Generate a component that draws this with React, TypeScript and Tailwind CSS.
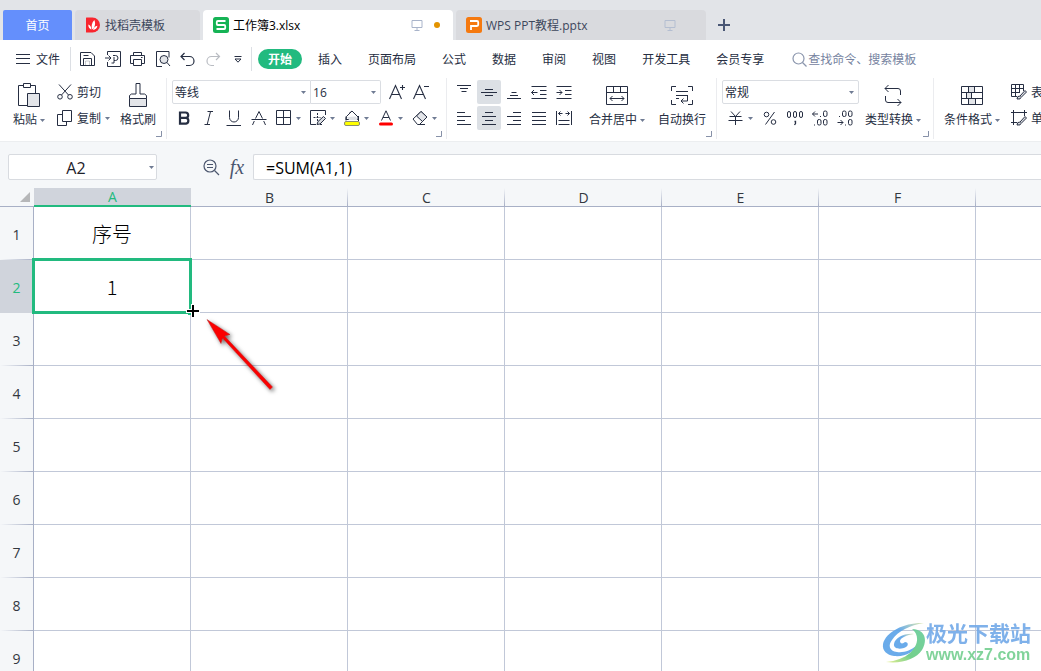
import React, { useState } from "react";
import type { ReactNode } from "react";

const MENUS = ["插入", "页面布局", "公式", "数据", "审阅", "视图", "开发工具", "会员专享"];
const COLUMNS = ["A", "B", "C", "D", "E", "F", "G"];
const ROWS = [1, 2, 3, 4, 5, 6, 7, 8, 9];

/* ---------- Shared pieces ---------- */

function Icon({ w = 16, h = 16, children }: { w?: number; h?: number; children: ReactNode }) {
  return (
    <svg width={w} height={h} viewBox={`0 0 ${w} ${h}`} fill="none" stroke="currentColor" className="shrink-0" aria-hidden="true">
      {children}
    </svg>
  );
}

function Caret() {
  return (
    <svg width="5" height="3" viewBox="0 0 5 3" className="shrink-0 text-[#6f7b93]" aria-hidden="true">
      <path d="M0 0h5L2.5 3z" fill="currentColor" />
    </svg>
  );
}

function ToolButton({ label, active, children }: { label: string; active?: boolean; children: ReactNode }) {
  return (
    <button
      aria-label={label}
      className={`flex h-6 w-6 items-center justify-center rounded-xs ${active ? "bg-[#dce0e5]" : "hover:bg-gray-100"}`}
    >
      {children}
    </button>
  );
}

function SplitButton({ label, children }: { label: string; children: ReactNode }) {
  return (
    <button aria-label={label} className="flex h-6 w-[33px] items-center gap-1 rounded-xs pl-1 hover:bg-gray-100">
      {children}
      <Caret />
    </button>
  );
}

function BigButton({ label, caret, children }: { label: string; caret?: boolean; children: ReactNode }) {
  return (
    <button className="flex shrink-0 flex-col items-center rounded-xs px-1 pt-px hover:bg-gray-100">
      <span className="flex h-7 items-center">{children}</span>
      <span className="flex items-center gap-[3px] leading-[22px] whitespace-nowrap">
        {label}
        {caret && <Caret />}
      </span>
    </button>
  );
}

function SmallButton({ label, caret, children }: { label: string; caret?: boolean; children: ReactNode }) {
  return (
    <button className="flex h-6 items-center gap-1 rounded-xs px-1 whitespace-nowrap hover:bg-gray-100">
      {children}
      <span className="pt-0.5">{label}</span>
      {caret && <Caret />}
    </button>
  );
}

function Group({ className, launcher = true, children }: { className: string; launcher?: boolean; children: ReactNode }) {
  return (
    <section className={`relative flex shrink-0 border-r border-[#ebecef] pt-0.5 ${className}`}>
      {children}
      {launcher && (
        <button aria-label="更多设置" className="absolute right-1 bottom-0.5 text-[#8791a8]">
          <Icon w={6} h={6}>
            <path d="M0 5.500h5.500V0" />
          </Icon>
        </button>
      )}
    </section>
  );
}

function SelectBox({ label, value, options, className }: { label: string; value: string; options: string[]; className: string }) {
  return (
    <label className={`relative flex h-6 items-center border border-[#dadde2] bg-white ${className}`}>
      <select aria-label={label} defaultValue={value} className="h-full w-full appearance-none bg-transparent pt-0.5 pl-0.5 outline-none">
        {options.map((o) => (
          <option key={o}>{o}</option>
        ))}
      </select>
      <span className="pointer-events-none absolute right-1">
        <Caret />
      </span>
    </label>
  );
}

function MonitorIcon() {
  return (
    <Icon w={12} h={12}>
      <path d="M1 1.500h10v7H1zM6 8.500v3M3.500 11.500h5" />
    </Icon>
  );
}

/* ---------- Document tabs ---------- */

function TabBar() {
  return (
    <nav className="flex h-10 items-end gap-[3px] bg-[#e2e4e8] pl-[3px] text-[#3d475c]">
      <button className="h-[30px] w-[69px] rounded-t-xs bg-[#648ffc] pt-0.5 text-white">首页</button>
      <button className="flex h-[30px] w-[125px] items-center gap-1 rounded-t-sm bg-[#d9dade] pl-[10px]">
        <svg width="16" height="16" viewBox="0 0 16 16" aria-hidden="true">
          <path d="M1 1Q1 .5 1.500 .5h6a7.500 7.500 0 0 1 0 15h-6Q1 15.500 1 15z" fill="#f8262f" />
          <path d="M7.300 12.500C6 9.500 6.600 6 9.300 3c1.500 3.200 1 7-2 9.500zM6.400 12.800C4.300 11.800 3.200 10 3.300 7.600c2 .9 3.300 2.800 3.100 5.200zM8 13c.5-2.200 2-3.800 4.400-4.200-.3 2.500-2 4.100-4.400 4.200z" fill="#fff" />
        </svg>
        <span className="pt-0.5">找稻壳模板</span>
      </button>
      <button className="flex h-[30px] w-[250px] items-center rounded-t-sm bg-white pr-[13px] pl-[10px] text-black">
        <svg width="16" height="16" viewBox="0 0 16 16" aria-hidden="true">
          <rect width="16" height="16" rx="2.500" fill="#16b355" />
          <path d="M12.500 4H4.800q-1 0-1 1v2q0 1 1 1h6.400q1 0 1 1v2q0 1-1 1H3.500" fill="none" stroke="#fff" strokeWidth="1.800" />
        </svg>
        <span className="ml-1 pt-0.5">工作簿3.xlsx</span>
        <span className="ml-auto text-[#a9b4ca]">
          <MonitorIcon />
        </span>
        <span className="ml-[11px] h-1.5 w-1.5 rounded-full bg-[#e39300]" />
      </button>
      <button className="flex h-[30px] w-[250px] items-center rounded-t-sm bg-[#d9dade] pr-[30px] pl-[10px]">
        <svg width="16" height="16" viewBox="0 0 16 16" aria-hidden="true">
          <rect width="16" height="16" rx="2.500" fill="#f5790f" />
          <path d="M4 4h7q1.200 0 1.200 1.200v2.600Q12.200 9 11 9H5v4" fill="none" stroke="#fff" strokeWidth="1.800" />
        </svg>
        <span className="ml-1 pt-0.5">WPS PPT教程.pptx</span>
        <span className="ml-auto text-[#b4bed1]">
          <MonitorIcon />
        </span>
      </button>
      <button aria-label="新建" className="ml-[3px] flex h-[30px] w-6 items-center justify-center text-[#4a5775]">
        <Icon w={12} h={12}>
          <path d="M6 0v12M0 6h12" strokeWidth="2" />
        </Icon>
      </button>
    </nav>
  );
}

/* ---------- Menu row ---------- */

function MenuRow() {
  return (
    <div className="flex h-[38px] items-center pl-3 whitespace-nowrap">
      <button className="flex items-center gap-1.5 px-1">
        <Icon w={14} h={14}>
          <path d="M0 2.500h14M0 6.500h14M0 11.500h14" />
        </Icon>
        <span className="pt-0.5">文件</span>
      </button>
      <span className="mr-[5px] ml-1.5 h-6 w-px bg-[#dcdfe4]" />
      <div className="flex gap-px">
        <ToolButton label="保存">
          <Icon>
            <path d="M.5 14.500V1.500h10.500l3.500 3.500v9.500zM3.500 14.500V7.500h8v7M3.500 4.500h5" />
            <path d="M5.500 14.500v-4.500h4v4.500" opacity=".25" />
          </Icon>
        </ToolButton>
        <ToolButton label="输出为PDF">
          <Icon>
            <path d="M2.500 4V.5h13v15h-13V11M0 7h5.500M3.500 4.500 6 7 3.500 9.500" />
            <path d="M8 4.500h2.500a2.500 2.500 0 0 1 0 5H9v2.500H6.500M9 9.500V6" />
          </Icon>
        </ToolButton>
        <ToolButton label="打印">
          <Icon>
            <path d="M3.500 4.500v-3h8v3M3.500 12.500h-3v-8h14v8h-3" />
            <path d="M3.500 8.500h8v6h-8z" />
            <path d="M11 6.500h1.500" />
          </Icon>
        </ToolButton>
        <ToolButton label="打印预览">
          <Icon>
            <path d="M7 15.500H1.500V.5h12.500v6" />
            <circle cx="9" cy="8.500" r="4" fill="#e3e5e9" />
            <path d="M12 11.500l3 3.500" />
          </Icon>
        </ToolButton>
        <ToolButton label="撤销">
          <Icon>
            <path d="M1 5.500h8.500a4.500 4.500 0 0 1 0 9H6M4.500 2l-3.500 3.500L4.500 9" strokeWidth="1.200" />
          </Icon>
        </ToolButton>
        <button aria-label="恢复" disabled className="flex h-6 w-6 items-center justify-center text-[#b9bcc2]">
          <Icon>
            <path d="M14.500 5.500H6.500a4.500 4.500 0 0 0 0 9H9M11 2l3.500 3.500L11 9" strokeWidth="1.200" />
          </Icon>
        </button>
        <ToolButton label="自定义快速访问工具栏">
          <Icon w={8} h={8}>
            <path d="M.5 1.500h7M1 4l3 3.200L7 4z" />
          </Icon>
        </ToolButton>
      </div>
      <span className="mr-1.5 ml-px h-6 w-px bg-[#dcdfe4]" />
      <button className="mr-[3px] h-5 rounded-full bg-[#22ba7f] px-[10px] pt-0.5 font-bold text-white">开始</button>
      {MENUS.map((m) => (
        <button key={m} className="px-[13px] pt-0.5">
          {m}
        </button>
      ))}
      <label className="ml-[15px] flex min-w-0 flex-1 items-center gap-px text-[#8b96ad]">
        <Icon w={15} h={15}>
          <circle cx="6.500" cy="6.500" r="5.500" strokeWidth="1.200" />
          <path d="M10.500 10.500l4 4" strokeWidth="1.200" />
        </Icon>
        <input
          aria-label="查找命令、搜索模板"
          placeholder="查找命令、搜索模板"
          className="min-w-0 flex-1 bg-transparent pt-0.5 outline-none placeholder:text-[#7683a0]"
        />
      </label>
    </div>
  );
}

/* ---------- Ribbon ---------- */

function Ribbon() {
  return (
    <div className="flex h-16 overflow-hidden border-b border-[#eceef0] pb-0.5 pl-[9px]">
      {/* Clipboard */}
      <Group className="pr-1.5">
        <BigButton label="粘贴" caret>
          <Icon w={22} h={24}>
            <path d="M5 2.500H.5v20H9M13 2.500h4.500V10M5.500.5h7v4h-7z" />
            <path d="M9.500 10.500h12v13h-12z" fill="#e3e5e9" />
          </Icon>
        </BigButton>
        <div className="ml-1 flex flex-col gap-0.5">
          <SmallButton label="剪切">
            <Icon>
              <path d="M2 .5l9.500 10.500M14 .5L4.500 11" />
              <circle cx="3" cy="12.800" r="2.300" />
              <circle cx="13" cy="12.800" r="2.300" />
            </Icon>
          </SmallButton>
          <SmallButton label="复制" caret>
            <Icon>
              <path d="M5.500.5h9v11h-9zM5.500 4.500h-5v11h9v-4" />
            </Icon>
          </SmallButton>
        </div>
        <div className="ml-0.5 flex">
          <BigButton label="格式刷">
            <Icon w={18} h={24}>
              <path d="M.5 15.500h17v8H.5z" fill="#e3e5e9" />
              <path d="M.5 15.500v-3l2-1.500h4.500V.5h4V11h4.500l2 1.500v3" />
            </Icon>
          </BigButton>
        </div>
      </Group>

      {/* Font */}
      <Group className="flex-col gap-0.5 px-[5px]">
        <div className="flex">
          <SelectBox label="字体" value="等线" options={["等线", "宋体", "黑体"]} className="w-[139px] rounded-l-xs" />
          <SelectBox label="字号" value="16" options={["12", "14", "16", "18"]} className="mr-1 w-[70px] rounded-r-xs border-l-0" />
          <ToolButton label="增大字号">
            <Icon>
              <path d="M.5 15L6.500 1.500 12.500 15M2.500 10.500h8M11 3.500h5M13.500 1v5" strokeWidth="1.100" />
            </Icon>
          </ToolButton>
          <ToolButton label="减小字号">
            <Icon>
              <path d="M.5 15L6.500 1.500 12.500 15M2.500 10.500h8M11 2.500h5" strokeWidth="1.100" />
            </Icon>
          </ToolButton>
        </div>
        <div className="flex gap-px">
          <ToolButton label="加粗">
            <Icon>
              <path d="M4 2.500h5.500a2.600 2.600 0 0 1 0 5.400H4zM4 7.900h6a2.900 2.900 0 0 1 0 5.700H4z" strokeWidth="2.200" />
            </Icon>
          </ToolButton>
          <ToolButton label="倾斜">
            <Icon>
              <path d="M6.500 1.500h5.500M3.500 14.500H9M9.500 1.500l-3.300 13" />
            </Icon>
          </ToolButton>
          <ToolButton label="下划线">
            <Icon>
              <path d="M3.500.5v7a4.500 4.500 0 0 0 9 0v-7M.5 15.500h14.500" />
            </Icon>
          </ToolButton>
          <ToolButton label="删除线">
            <Icon>
              <path d="M.5 9.500h15M4.500 8.500L8 1.500l3.500 7M3.300 11L1.500 15M12.700 11l1.800 4" />
            </Icon>
          </ToolButton>
          <SplitButton label="边框">
            <Icon>
              <path d="M.5.5h14v14H.5zM7.500.5v14M.5 7.500h14" />
            </Icon>
          </SplitButton>
          <SplitButton label="绘制边框">
            <Icon>
              <path d="M15.500 5V.5H.5v14H6M10 14.500h2" />
              <path d="M7.500 3v8M3.500 7.500h7" strokeDasharray="2 1" />
              <path d="M7 14.500l1-3 5.500-5 2 2-5.500 5.500z" fill="#d9dce1" />
            </Icon>
          </SplitButton>
          <SplitButton label="填充颜色">
            <Icon>
              <path d="M2.500 6.500L8 1l6 6v2.500H2z" fill="#fff" />
              <path d="M3 7l9-.5 1.500 3.500H5z" fill="#dfe2e6" stroke="none" />
              <path d="M2 6.500v4M14.500 6v5M5 3.500L8 1" />
              <rect x=".5" y="11.500" width="15" height="4" rx="1.500" fill="#ffff00" stroke="#8b8f72" />
            </Icon>
          </SplitButton>
          <SplitButton label="字体颜色">
            <Icon>
              <path d="M3.500 10.500L8 .8l4.500 9.700M5 7.500h6" />
              <path d="M2.500 14h11" stroke="#ff0000" strokeWidth="3" strokeLinecap="round" />
            </Icon>
          </SplitButton>
          <SplitButton label="清除">
            <Icon>
              <path d="M1 9l8-7.500 6 5.500-7.500 7.500H5.500z" />
              <path d="M4.500 6L9 1.500l6 5.500-4.500 4.500z" fill="#e3e5e9" />
              <path d="M6 14.500h7" />
            </Icon>
          </SplitButton>
        </div>
      </Group>

      {/* Alignment */}
      <Group className="pr-1.5 pl-[5px]">
        <div className="grid grid-cols-5 grid-rows-[24px_24px] gap-x-px gap-y-0.5">
          <ToolButton label="顶端对齐">
            <Icon>
              <path d="M1 1.500h14M4 4.500h8M5.500 7.500h5" />
            </Icon>
          </ToolButton>
          <ToolButton label="垂直居中" active>
            <Icon>
              <path d="M4 5.500h8M0 8.500h16M4 11.500h8" />
            </Icon>
          </ToolButton>
          <ToolButton label="底端对齐">
            <Icon>
              <path d="M5.500 8.500h5M4 11.500h8M1 14.500h14" />
            </Icon>
          </ToolButton>
          <ToolButton label="减少缩进">
            <Icon>
              <path d="M.5 2.500h15M9 6.500h6.500M9 10.500h6.500M.5 14.500h15M.5 8.500h6M3 6L.5 8.500 3 11" />
            </Icon>
          </ToolButton>
          <ToolButton label="增加缩进">
            <Icon>
              <path d="M.5 2.500h15M9 6.500h6.500M9 10.500h6.500M.5 14.500h15M.5 8.500H6M3.500 6L6 8.500 3.500 11" />
            </Icon>
          </ToolButton>
          <ToolButton label="左对齐">
            <Icon>
              <path d="M1 2.500h8M1 6.500h14M1 10.500h8M1 14.500h14" />
            </Icon>
          </ToolButton>
          <ToolButton label="水平居中" active>
            <Icon>
              <path d="M4 2.500h8M1 6.500h14M4 10.500h8M1 14.500h14" />
            </Icon>
          </ToolButton>
          <ToolButton label="右对齐">
            <Icon>
              <path d="M7 2.500h8M1 6.500h14M7 10.500h8M1 14.500h14" />
            </Icon>
          </ToolButton>
          <ToolButton label="两端对齐">
            <Icon>
              <path d="M1 2.500h14M1 6.500h14M1 10.500h14M1 14.500h14" />
            </Icon>
          </ToolButton>
          <ToolButton label="分散对齐">
            <Icon>
              <path d="M.5 1v14M15.500 1v14M2.500 10.500h11M2.500 14.500h11M2.500 3.500h4M9.500 3.500h4M4.500 1.500l-2 2 2 2M11.500 1.500l2 2-2 2" />
            </Icon>
          </ToolButton>
        </div>
        <div className="ml-[9px] flex gap-[5px]">
          <BigButton label="合并居中" caret>
            <Icon w={22} h={20}>
              <path d="M.5 1.500h21v18H.5zM.5 7.500h21M7.500 1.500v6M14.500 1.500v6M4 13.500h14M6.500 11L4 13.500 6.500 16M15.500 11l2.500 2.500-2.500 2.500" />
            </Icon>
          </BigButton>
          <BigButton label="自动换行">
            <Icon w={22} h={20}>
              <path d="M5 1.500H.5V6M17 1.500h4.500V6M.5 15v4.500H5M21.500 15v4.500H17M5 6.500h12M5 10.500h12M5 13.500h3M16.500 10.500v5.500H10M12.500 13.500L10 16l2.500 2.500" />
            </Icon>
          </BigButton>
        </div>
      </Group>

      {/* Number */}
      <Group className="pr-2 pl-[5px]">
        <div className="mr-0.5 flex flex-col gap-0.5">
          <SelectBox label="数字格式" value="常规" options={["常规", "数值", "货币"]} className="w-[137px] rounded-xs" />
          <div className="flex gap-px pl-0.5">
            <SplitButton label="货币">
              <Icon>
                <path d="M3 1.500l4.500 5 4.500-5M1.500 6.500h12M.5 10.500h14M7.500 6.500v8.500" />
              </Icon>
            </SplitButton>
            <ToolButton label="百分比样式">
              <Icon>
                <path d="M12.500 2L3.500 14.500" />
                <circle cx="4.500" cy="4.500" r="2.300" />
                <circle cx="11.500" cy="12" r="2.300" />
              </Icon>
            </ToolButton>
            <ToolButton label="千位分隔样式">
              <Icon w={18}>
                <rect x="1.500" y="1.500" width="3" height="6" rx="1.500" />
                <rect x="7.500" y="1.500" width="3" height="6" rx="1.500" />
                <rect x="13.500" y="1.500" width="3" height="6" rx="1.500" />
                <path d="M8.500 11.500h1v2l-1 1.500" strokeWidth="1.300" />
              </Icon>
            </ToolButton>
            <ToolButton label="增加小数位数">
              <Icon>
                <path d="M.5 4h5.500M3 1.500L.5 4 3 6.500M8 6.500h1M2 15h1" />
                <rect x="11.500" y="1" width="3.500" height="5.500" rx="1.500" />
                <rect x="5.500" y="9.500" width="3.500" height="5.500" rx="1.500" />
                <rect x="11.500" y="9.500" width="3.500" height="5.500" rx="1.500" />
              </Icon>
            </ToolButton>
            <ToolButton label="减少小数位数">
              <Icon>
                <path d="M.5 12.500H6M3.500 10L6 12.500 3.500 15M2 6.500h1M8 15h1" />
                <rect x="5.500" y="1" width="3.500" height="5.500" rx="1.500" />
                <rect x="11.500" y="1" width="3.500" height="5.500" rx="1.500" />
                <rect x="11.500" y="9.500" width="3.500" height="5.500" rx="1.500" />
              </Icon>
            </ToolButton>
          </div>
        </div>
        <BigButton label="类型转换" caret>
          <Icon w={18} h={22}>
            <path d="M1 4.500h13q2.500 0 2.500 2.500v4M4.500 1L1 4.500 4.500 8M17 18.500H4q-2.500 0-2.500-2.500v-4M13.500 15l3.500 3.500-3.500 3.500" />
          </Icon>
        </BigButton>
      </Group>

      {/* Styles */}
      <Group className="pl-1.5" launcher={false}>
        <BigButton label="条件格式" caret>
          <Icon w={22} h={20}>
            <path d="M7.500 1.500h6v6h-6zM5.500 7.500h5v6h-5zM7.500 13.500h7v6h-7z" fill="#e3e5e9" stroke="none" />
            <path d="M.5 1.500h21v18H.5zM.5 7.500h21M.5 13.500h21M7.500 1.500v6M13.500 1.500v6M5.500 7.500v6M10.500 7.500v6M7.500 13.500v6M14.500 13.500v6" />
          </Icon>
        </BigButton>
        <div className="ml-[3px] flex flex-col gap-0.5">
          <SmallButton label="表格样式">
            <Icon>
              <path d="M12.500 7V.5H.5v12H6M.5 4.500h12M.5 8.500H9M4.500.5v12M8.500.5V8" />
              <path d="M6 15q0-3 2.500-3l1.500 1.500q0 2-4 1.500zM9 12l5-5.500 1.500 1.500-5 5" fill="#d9dce1" />
            </Icon>
          </SmallButton>
          <SmallButton label="单元格样式">
            <Icon>
              <path d="M0 2.500h16M0 12.500h6M2.500 0v15M13.500 0v6" />
              <path d="M6 15q0-3 2.500-3l1.500 1.500q0 2-4 1.500zM9 12l5-5.500 1.500 1.500-5 5" fill="#d9dce1" />
            </Icon>
          </SmallButton>
        </div>
      </Group>
    </div>
  );
}

/* ---------- Formula bar ---------- */

function FormulaBar() {
  const [formula, setFormula] = useState("=SUM(A1,1)");

  return (
    <div className="flex h-[46px] items-start bg-[#f5f7f9] pt-3 pl-2 text-base text-[#1d2129]">
      <div className="flex h-[26px] w-[149px] items-center rounded-xs border border-[#d8dbe0] bg-white pr-0.5">
        <input aria-label="名称框" defaultValue="A2" className="min-w-0 flex-1 pt-0.5 pr-1.5 text-center leading-6 outline-none" />
        <button aria-label="选择名称" className="flex h-full items-center">
          <Caret />
        </button>
      </div>
      <div className="ml-[42px] flex h-[26px] items-center gap-0.5 text-[#4b566e]">
        <ToolButton label="浏览公式结果">
          <Icon w={17} h={17}>
            <circle cx="7" cy="7" r="6" strokeWidth="1.200" />
            <path d="M4 5.500h6M4 8.500h6M11.500 11.500l4.500 4.500" strokeWidth="1.200" />
          </Icon>
        </ToolButton>
        <button className="h-6 w-6 font-['Liberation_Serif',serif] text-xl leading-5 italic">fx</button>
      </div>
      <input
        aria-label="编辑栏"
        value={formula}
        onChange={(e) => setFormula(e.target.value)}
        className="ml-1 h-[26px] min-w-0 flex-1 rounded-l-xs border border-r-0 border-[#d8dbe0] bg-white pt-0.5 pl-3 text-black outline-none"
      />
    </div>
  );
}

/* ---------- Sheet ---------- */

function DragHint() {
  return (
    <svg width="96" height="96" viewBox="0 0 96 96" className="pointer-events-none absolute top-11 left-[152px] z-10" aria-hidden="true">
      <defs>
        <filter id="arrowShadow" x="-20%" y="-20%" width="150%" height="150%">
          <feDropShadow dx="2" dy="2" stdDeviation="2" floodColor="#000" floodOpacity="0.6" />
        </filter>
      </defs>
      {/* Fill handle and cross cursor */}
      <path d="M0 5h5V0h4v5h5v4H9v5H5V9H0z" fill="#fff" />
      <path d="M2 9h3v2H2z" fill="#22ba7f" />
      <path d="M6 1h2v5h5v2H8v5H6V8H1V6h5z" fill="#000" />
      <g filter="url(#arrowShadow)">
        <path d="M21 15.500l23 15-5.500 1.500 48 51-2.500 2.500-47.500-51.500-1.500 5.500z" fill="#fb0505" stroke="#a01818" strokeWidth=".4" />
      </g>
    </svg>
  );
}

function Sheet() {
  const values: Record<string, string> = { A1: "序号", A2: "1" };

  return (
    <main className="flex-1 overflow-hidden bg-white">
      <table className="w-[1133px] table-fixed border-separate border-spacing-0 text-sm text-[#33383f]">
        <colgroup>
          <col className="w-[34px]" />
          {COLUMNS.map((c) => (
            <col key={c} className="w-[157px]" />
          ))}
        </colgroup>
        <thead>
          <tr className="h-[19px] bg-[#f5f7f9] leading-4">
            <th aria-label="全选" className="border-b border-[#a8b0c6] p-0">
              <svg width="10" height="10" viewBox="0 0 10 10" className="ml-5" aria-hidden="true">
                <path d="M10 0v10H0z" fill="#b6b7b9" />
              </svg>
            </th>
            {COLUMNS.map((c) => (
              <th
                key={c}
                className={`p-0 font-normal ${
                  c === "A"
                    ? "border-b-2 border-[#22ba7f] bg-[#d0d4dc] pt-px text-[#22ba7f]"
                    : "border-b border-[#a8b0c6] bg-[linear-gradient(to_bottom,transparent,#a8b0c6)] bg-[length:1px_100%] bg-right bg-no-repeat pt-0.5"
                }`}
              >
                {c}
              </th>
            ))}
          </tr>
        </thead>
        <tbody>
          {ROWS.map((r) => (
            <tr key={r} className="h-[53px]">
              <th
                className={`border-r border-[#a8b0c6] p-0 pt-0.5 font-normal ${
                  r === 2
                    ? "bg-[#d0d4dc] text-[#22ba7f]"
                    : "bg-[#f5f7f9] bg-[linear-gradient(to_right,transparent,#a8b0c6)] bg-[length:100%_1px] bg-bottom bg-no-repeat"
                }`}
              >
                {r}
              </th>
              {COLUMNS.map((c) => (
                <td
                  key={c}
                  className="relative border-r border-b border-[#c1c8d8] p-0 pt-0.5 text-center font-['Noto_Sans_CJK_SC',sans-serif] text-xl leading-6 font-light text-black"
                >
                  {values[c + r]}
                  {c === "A" && r === 2 && (
                    <>
                      <span className="absolute -inset-0.5 border-3 border-[#22ba7f]" />
                      <DragHint />
                    </>
                  )}
                </td>
              ))}
            </tr>
          ))}
        </tbody>
      </table>
    </main>
  );
}

function SiteBadge() {
  return (
    <a href="#" className="absolute right-2.5 bottom-1.5 z-20 flex items-end opacity-90">
      <svg width="44" height="44" viewBox="0 0 44 44" aria-hidden="true">
        <defs>
          <linearGradient id="badgeBlue" x1="0" y1="1" x2="1" y2="0">
            <stop offset="0" stopColor="#5aa3e8" />
            <stop offset=".6" stopColor="#5aa3e8" />
            <stop offset="1" stopColor="#dfe9a8" />
          </linearGradient>
          <linearGradient id="badgeGreen" x1="0" y1="1" x2="1" y2="0">
            <stop offset="0" stopColor="#e6ee86" />
            <stop offset=".4" stopColor="#66cb80" />
            <stop offset="1" stopColor="#66cb9a" />
          </linearGradient>
        </defs>
        <path d="M42 2C24 1 4 10 1 23c-1 7 4 11 11 12 12 1 20-4 22-10-5 4-12 7-19 6-8-1-9-7-5-12C16 10 28 4 42 2z" fill="url(#badgeBlue)" />
        <path d="M32 13c-10-1-19 4-20 10-1 5 7 6 12 3 3-2 2-5-1-5-2 2-5 2-5-1 0-3 7-6 14-7z" fill="url(#badgeBlue)" />
        <path d="M30 8c13 0 16 11 10 21C34 38 20 43 4 41c10-1 18-4 24-9 8-7 10-18 2-24z" fill="url(#badgeGreen)" />
      </svg>
      <span className="flex flex-col font-bold">
        <span className="text-[21px] leading-6 text-[#72a9e8]">极光下载站</span>
        <span className="font-['Liberation_Sans',sans-serif] text-base leading-5 text-[#74cf90]">www.xz7.com</span>
      </span>
    </a>
  );
}

export default function App() {
  return (
    <div className="relative flex h-screen flex-col overflow-hidden bg-white font-['Open_Sans','Noto_Sans_CJK_SC',sans-serif] text-xs text-[#262e42]">
      <TabBar />
      <MenuRow />
      <Ribbon />
      <FormulaBar />
      <Sheet />
      <SiteBadge />
    </div>
  );
}
